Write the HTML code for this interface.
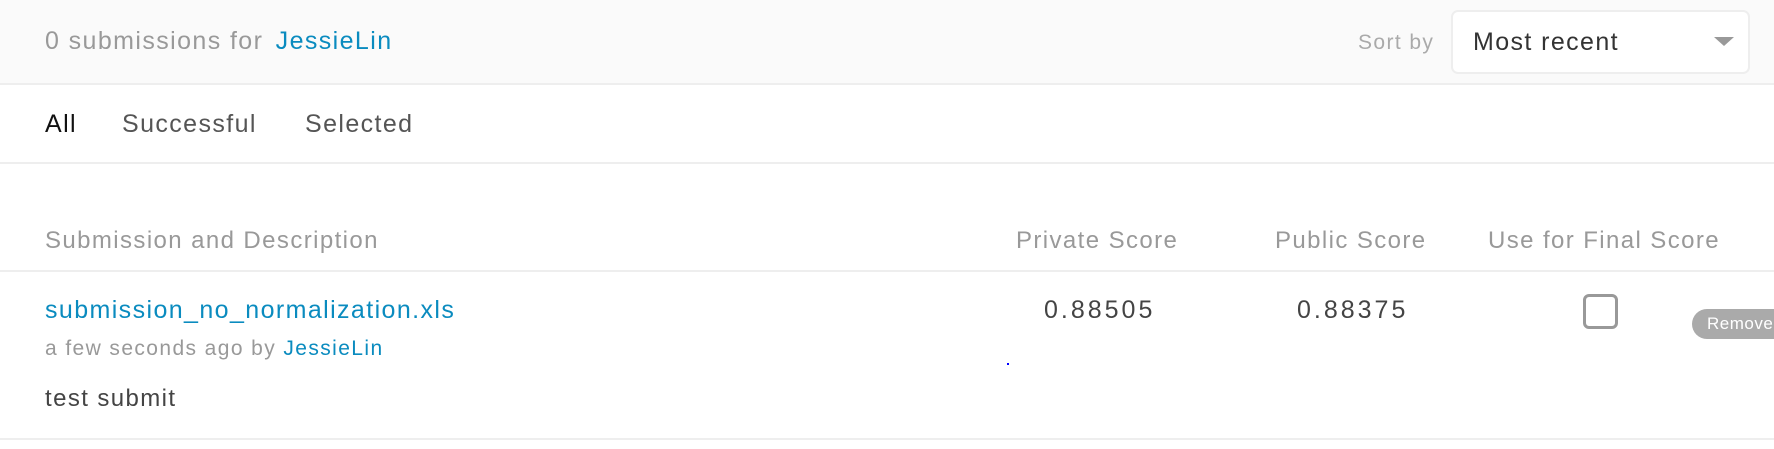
<!DOCTYPE html>
<html><head><meta charset="utf-8"><style>
*{margin:0;padding:0;box-sizing:border-box}
body{width:1774px;height:449px;background:#fff;font-family:"Liberation Sans",Arial,sans-serif;position:relative;overflow:hidden}
.a{position:absolute;white-space:nowrap;line-height:1;letter-spacing:1.4px}
.hdr{position:absolute;left:0;top:0;width:1774px;height:85px;background:#fafafa;border-bottom:2px solid #eee}
.line{position:absolute;left:0;width:1774px;height:2px;background:#eee}
.blue{color:#0a8bbf}
</style></head><body>
<div class="hdr"></div>
<div class="a" style="left:45px;top:29px;font-size:25px;color:#999">0 submissions for <span class="blue" style="margin-left:4px">JessieLin</span></div>
<div class="a" style="left:1358px;top:32px;font-size:21px;color:#aaa">Sort by</div>
<div class="a" style="left:1451px;top:10px;width:299px;height:64px;background:#fff;border:2px solid #eee;border-radius:7px"></div>
<div class="a" style="left:1473px;top:30px;font-size:25px;color:#333">Most recent</div>
<div class="a" style="left:1714px;top:37px;width:0;height:0;border-left:10px solid transparent;border-right:10px solid transparent;border-top:9px solid #999"></div>

<div class="a" style="left:45px;top:112px;font-size:25px;color:#111">All</div>
<div class="a" style="left:122px;top:112px;font-size:25px;color:#555">Successful</div>
<div class="a" style="left:305px;top:112px;font-size:25px;color:#555">Selected</div>
<div class="line" style="top:162px"></div>

<div class="a" style="left:45px;top:229px;font-size:24px;color:#999">Submission and Description</div>
<div class="a" style="left:1016px;top:229px;font-size:24px;color:#999">Private Score</div>
<div class="a" style="left:1275px;top:229px;font-size:24px;color:#999">Public Score</div>
<div class="a" style="left:1488px;top:229px;font-size:24px;color:#999">Use for Final Score</div>
<div class="line" style="top:270px"></div>

<div class="a blue" style="left:45px;top:298px;font-size:25px">submission_no_normalization.xls</div>
<div class="a" style="left:45px;top:338px;font-size:21px;color:#999">a few seconds ago by <span class="blue">JessieLin</span></div>
<div class="a" style="left:45px;top:387px;font-size:24px;color:#444">test submit</div>
<div class="a" style="left:1044px;top:298px;font-size:25px;color:#444;letter-spacing:3px">0.88505</div>
<div class="a" style="left:1297px;top:298px;font-size:25px;color:#444;letter-spacing:3px">0.88375</div>
<div class="a" style="left:1583px;top:294px;width:35px;height:35px;border:3px solid #999;border-radius:6px"></div>
<div class="a" style="left:1692px;top:309px;width:100px;height:30px;background:#aaa;border-radius:15px;color:#fff;font-size:17px;padding:6px 0 0 15px;letter-spacing:0.5px">Remove</div>
<div class="a" style="left:1007px;top:363px;width:2px;height:2px;background:#00f"></div>
<div class="line" style="top:438px"></div>
</body></html>
